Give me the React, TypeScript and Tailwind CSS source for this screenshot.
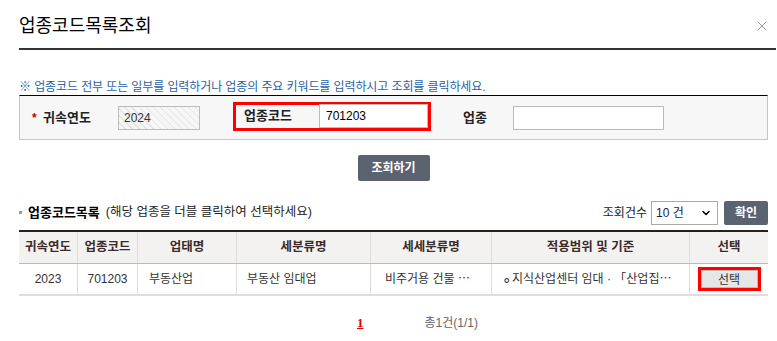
import { ChevronDown, X } from 'lucide-react';

const font = { fontFamily: "'Liberation Sans', 'Noto Sans CJK KR', sans-serif" };

const cols = [
  { label: '귀속연도', w: 'w-[58px]' },
  { label: '업종코드', w: 'w-[60px]' },
  { label: '업태명', w: 'w-[99px]' },
  { label: '세분류명', w: 'w-[134px]' },
  { label: '세세분류명', w: 'w-[121px]' },
  { label: '적용범위 및 기준', w: 'w-[198px]' },
  { label: '선택', w: 'w-[79px]' },
];

export default function App() {
  return (
    <div className="w-[777px] h-[341px] bg-white text-[12px] text-[#333] overflow-hidden" style={font}>
      {/* 헤더 */}
      <div className="mx-[19px] mr-[1px] h-[50px] flex items-center justify-between border-b-[2px] border-[#333] pt-[4px]">
        <h1 className="text-[18px] text-black leading-none">업종코드목록조회</h1>
        <X className="w-[16px] h-[16px] text-[#666] mr-[6px]" strokeWidth={1} />
      </div>

      <div className="px-[19px] pr-[9px]">
        <p className="mt-[31px] text-[12px] tracking-[-0.1px] leading-[13px] text-[#1f5fa6] whitespace-nowrap">
          ※ 업종코드 전부 또는 일부를 입력하거나 업종의 주요 키워드를 입력하시고 조회를 클릭하세요.
        </p>

        {/* 검색 박스 */}
        <div className="mt-[1px] h-[45px] flex items-center pl-[12px] bg-[#f7f7f7] border border-[#c6c6c6] border-t-black">
          <span className="w-[11px] text-[#c00] font-bold">*</span>
          <span className="w-[75px] font-bold text-[13px] text-[#222]">귀속연도</span>
          <div className="w-[82px] h-[24px] border border-[#bbb] flex items-center px-[5px] text-[#333] bg-[repeating-linear-gradient(45deg,#f6f6f6_0px,#f6f6f6_4px,#e4e4e4_4px,#e4e4e4_5px)]">
            2024
          </div>
          <div className="ml-[33px] w-[198px] h-[29px] border-[3px] border-[#ff0000] flex items-center -mt-[3px]">
            <span className="w-[83px] pl-[8px] font-bold text-[13px] text-[#222]">업종코드</span>
            <div className="w-[109px] h-[24px] border border-[#bbb] bg-white flex items-center px-[6px] text-black">701203</div>
          </div>
          <span className="ml-[32px] w-[50px] font-bold text-[13px] text-[#222]">업종</span>
          <div className="w-[151px] h-[24px] border border-[#bbb] bg-white" />
        </div>

        <div className="flex justify-center mt-[15px]">
          <button className="w-[72px] h-[26px] rounded-[2px] bg-[#5c6370] text-white font-bold text-[12px]">조회하기</button>
        </div>

        {/* 목록 제목 */}
        <div className="mt-[19px] flex items-center justify-between h-[25px]">
          <div className="flex items-center">
            <span className="w-[3px] h-[3px] bg-[#999] mr-[6px]" />
            <span className="font-bold text-[13px] text-black">업종코드목록</span>
            <span className="ml-[6px] text-[12.5px] text-[#222]">(해당 업종을 더블 클릭하여 선택하세요)</span>
          </div>
          <div className="flex items-center">
            <span className="text-[12px] text-[#222] mr-[4px]">조회건수</span>
            <div className="w-[67px] h-[24px] border border-[#aaa] bg-white flex items-center justify-between pl-[4px] pr-[5px]">
              <span className="text-[12px] text-[#1a1a4a]">10 건</span>
              <ChevronDown className="w-[12px] h-[12px] text-black" strokeWidth={3} />
            </div>
            <button className="ml-[6px] w-[44px] h-[24px] rounded-[2px] bg-[#5c6370] text-white font-bold text-[12px]">확인</button>
          </div>
        </div>

        {/* 테이블 */}
        <div className="mt-[5px] border-t-[2px] border-[#222]">
          <div className="flex h-[32px] bg-[#f3f2f0] border-b border-[#bbb]">
            {cols.map((c, i) => (
              <div
                key={c.label}
                className={`${c.w} flex items-center justify-center font-bold text-[12.5px] text-[#3a2a2a] ${i > 0 ? 'border-l border-[#ddd]' : ''}`}
              >
                {c.label}
              </div>
            ))}
          </div>
          <div className="flex h-[32px] border-b-[2px] border-[#ddd] text-[12px] text-[#333]">
            <div className="w-[58px] flex items-center justify-center">2023</div>
            <div className="w-[60px] flex items-center justify-center border-l border-[#ddd]">701203</div>
            <div className="w-[99px] flex items-center pl-[11px] border-l border-[#ddd]">부동산업</div>
            <div className="w-[134px] flex items-center pl-[10px] border-l border-[#ddd]">부동산 임대업</div>
            <div className="w-[121px] flex items-center pl-[14px] border-l border-[#ddd] whitespace-nowrap">비주거용 건물 ⋯</div>
            <div className="w-[198px] flex items-center pl-[10px] border-l border-[#ddd] whitespace-nowrap">
              <span className="text-[15px] leading-none mr-[1px]">∘</span>지식산업센터 임대 · 「산업집⋯
            </div>
            <div className="w-[79px] flex items-center justify-center border-l border-[#ddd]">
              <div className="w-[63px] h-[24px] border-[3px] border-[#ff0000] flex">
                <button className="flex-1 bg-[#e6e6e6] border border-[#bbb] text-[12px] text-[#333]">선택</button>
              </div>
            </div>
          </div>
        </div>

        {/* 페이징 */}
        <div className="flex items-center mt-[17px] pl-[338px]">
          <span className="text-[#d00] font-bold underline text-[13px]" style={{ fontFamily: "'Liberation Serif', serif" }}>1</span>
          <span className="ml-[61px] text-[#666] text-[12px]">총1건(1/1)</span>
        </div>
      </div>
    </div>
  );
}
